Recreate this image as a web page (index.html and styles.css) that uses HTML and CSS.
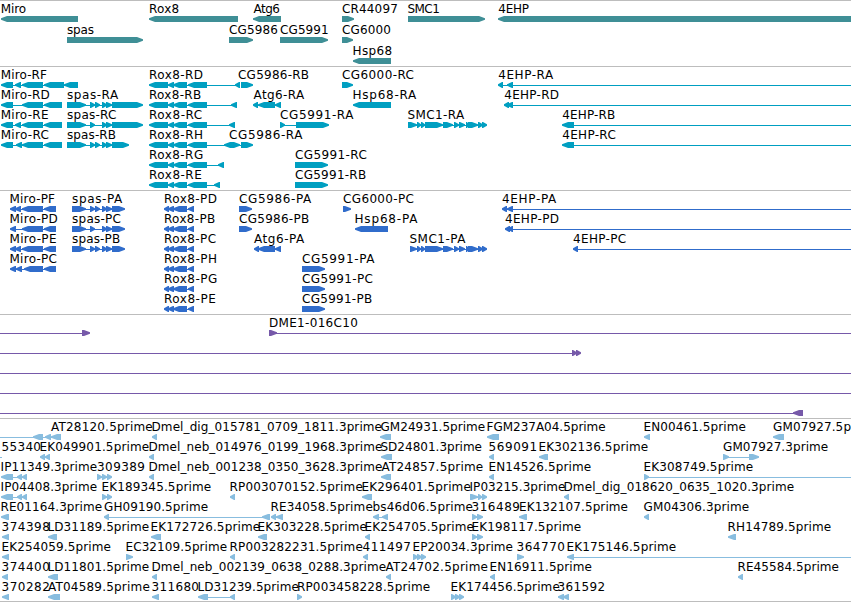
FILE: index.html
```html
<!DOCTYPE html>
<html lang="en">
<head>
<meta charset="utf-8">
<title>Genome tracks</title>
<link rel="stylesheet" href="styles.css">
</head>
<body>
<main class="browser" id="browser"></main>
<script src="tracks.js"></script>
</body>
</html>
```
FILE: styles.css
```css
body {
  margin: 0;
  background: #fff;
  overflow: hidden;
}

.browser {
  display: flex;
  flex-direction: column;
  width: 851px;
  height: 602px;
  box-sizing: border-box;
  border-bottom: 1px solid #bdbdbd;
}

.track {
  flex: none;
  border-top: 1px solid #bdbdbd;
  padding-bottom: 3px;
}

.row {
  display: block;
  width: 851px;
  height: 20px;
  overflow: visible;
}

.row text {
  font: 12px "DejaVu Sans", sans-serif;
  fill: #000;
  white-space: pre;
}

.gene { padding-bottom: 2px; color: #3f8f96; }
.gene .row { height: 21px; }
.transcript { color: #009fc1; }
.protein { color: #306ccb; }
.bac { color: #7659a9; }
.est { color: #88bddf; }

.shape { fill: currentColor; }
.link { fill: currentColor; shape-rendering: crispEdges; }
```
FILE: tracks.js
```js
// One string per row. Groups are separated by ";".
// label@start,end, then exons: "<a,b" points left, ">a,b" points right, "=a,b" is a thin line.
const rox = (p, labelEnd, last) => `Rox8-${p}@149,${labelEnd} <149,168 <168,174 <173,187 <188,207 ${last}`;
const roxP = (p, labelEnd) => `Rox8-${p}@164,${labelEnd} <164,169 <168,174 <173,187 <188,194`;
const smc = '>417,421 >421,425 >425,443 >443,453 >454,459 >459,465 >466,469 >468,478 >478,483 >482,487';

const tracks = [
  { kind: 'gene', rows: [
    'Miro@0.7,25.7 <1,78;Rox8@149,178.7 <149,238;Atg6@253.5,279.5 <253,281;CR44097@342,397.3 >342,354;SMC1@407.5,439.3 >408,485;4EHP@498.3,528.5 <498,860',
    'spas@67,93.5 >67,143;CG5986@229,277.5 >229,253;CG5991@280,328.2 >280,328;CG6000@342,390.5 >342,353',
    'Hsp68@352.5,391.7 <353,391'
  ]},
  { kind: 'transcript', rows: [
    `Miro-RF@0.7,46.5 <1,13 <15,21 <22,43 <44,64 <64,78;${rox('RD', 202.5, '<235,240')};CG5986-RB@238,308.5 >241,253;CG6000-RC@342,413.5 >342,353;4EHP-RA@498.3,552.7 <498,503 <507,513 =513,851`,
    `Miro-RD@0.7,49.3 <1,13 <22,43 <44,62;spas-RA@67,117.7 >67,86 >90,95 >95,100 >102,107 >106,112 >112,143;${rox('RB', 200.7, '<231,237')};Atg6-RA@253.5,303.8 <253,258 <258,275 <275,281;Hsp68-RA@352.5,415.8 <353,391;4EHP-RD@504.3,558.5 <504,509 <507,513 =513,851`,
    `Miro-RE@0.7,48 <1,13 <15,21 <22,43 <44,62;spas-RC@67,116 >67,86 >90,95 >102,107 >106,112 >112,143;${rox('RC', 201.7, '<229,235')};CG5991-RA@280,353 >280,285 >296,329;SMC1-RA@407.5,463.8 >408,417 ${smc};4EHP-RB@562.3,614.7 <562,574 =574,851`,
    `Miro-RC@0.7,48.3 <1,13 <16,22 <22,43 <44,62;spas-RB@67,115.5 >67,86 >90,95 >95,100 >102,107 >106,112 >112,129;${rox('RH', 202.5, '<224,233 >231,240 >241,253')};CG5986-RA@229,302;4EHP-RC@562.3,615.3 <562,574 =574,851`,
    `${rox('RG', 202.7, '<218,224')};CG5991-RC@295,366.3 >295,328`,
    `${rox('RE', 201.3, '<214,220')};CG5991-RB@295,365.7 >295,328`
  ]},
  { kind: 'protein', rows: [
    `Miro-PF@9.5,54.5 <10,16 <15,21 <22,43 <44,56;spas-PA@72,121.8 >72,86 >90,95 >95,100 >102,107 >106,112 >112,125;${roxP('PD', 216.5)};CG5986-PA@239,310.7 >239,252;CG6000-PC@343,413.5 >343,351;4EHP-PA@502,555.8 <502,507 <507,513 =513,851`,
    `Miro-PD@9.5,57.3 <10,16 <22,43 <44,56;spas-PC@72,120.5 >72,86 >90,95 >102,107 >106,112 >112,125;${roxP('PB', 214.7)};CG5986-PB@239,308.7 >239,252;Hsp68-PA@354.5,417 <355,388;4EHP-PD@505,558.5 <505,510 <508,513 =513,851`,
    `Miro-PE@9.5,56 <10,16 <15,21 <22,43 <44,56;spas-PB@72,119.7 >72,86 >90,95 >95,100 >102,107 >106,112 >112,125;${roxP('PC', 215.7)};Atg6-PA@254,303.8 <254,259 <258,275 <275,281;SMC1-PA@409.5,465 >410,417 ${smc};4EHP-PC@573,625.7 <573,578 =578,851`,
    `Miro-PC@9.5,56.5 <10,16 <16,22 <24,43 <44,56;${roxP('PH', 216.5)};CG5991-PA@302,374 >302,325`,
    `${roxP('PG', 216.7)};CG5991-PC@302,372.5 >302,325`,
    `${roxP('PE', 215.3)};CG5991-PB@302,371.7 >302,325`
  ]},
  { kind: 'bac', rows: [
    '=0,83 >82,90;DME1-016C10@269,357.3 >269,277 =277,851',
    '=0,572 >572,577 >576,581',
    '=0,851',
    '=0,851',
    '=0,794 <793,803'
  ]},
  { kind: 'est', rows: [
    'AT28120.5prime@51,152.2 =0,35 <33,43 <45,51 <51,61;Dmel_dig_015781_0709_1811.3prime@151.5,381.5 <152,157;GM24931.5prime@380.5,484.7 <380,391;FGM237A04.5prime@486.5,605.2 <487,499;EN00461.5prime@643.5,745.3 <644,650;GM07927.5p@773,850.5 <773,784',
    '55340@1.5,40.5 =0,2;EK049901.5prime@39.5,148.7 <40,45 <45,50;Dmel_neb_014976_0199_1968.3prime@148.5,381.8 <149,154;SD24801.3prime@380.5,481.5 <381,392;569091@488.5,536.7 <489,494;EK302136.5prime@538.5,647.7 <539,548;GM07927.3prime@723,827.7 >723,729 >749,759',
    'IP11349.3prime@0.5,96.7 <1,13 <17,22 <22,27;309389@97,144.5 >97,102 >102,107 >107,112;Dmel_neb_001238_0350_3628.3prime@148.5,381.8 <149,154;AT24857.5prime@381.5,482.7 <381,391;EN14526.5prime@488.5,590.7 <489,494;EK308749.5prime@643.5,752.7 >644,649 =649,851',
    'IP04408.3prime@0.5,96.7 <1,13 <17,22 <22,27;EK189345.5prime@101.5,210.7 >102,107 >107,112;RP003070152.5prime@229.5,362.3 <230,235;EK296401.5prime@361.5,470.3 <362,372;IP03215.3prime@469.5,565 >470,478 >478,482 >482,487;Dmel_dig_018620_0635_1020.3prime@563.5,793.7 <564,569',
    'RE01164.3prime@0.5,101.7 <1,9;GH09190.5prime@104,207.7 <104,109 <262,270;RE34058.5prime@270.5,372.3 <271,276 <276,283;bs46d06.5prime@372.5,472.5 <373,379 <382,388;316489@471.5,519.5 >472,477 >477,483;EK132107.5prime@519,627.5 <519,527;GM04306.3prime@643.5,748.7 <644,649',
    '374398@1.5,49.3 <2,9;LD31189.5prime@47.5,148.7 <48,57;EK172726.5prime@150.5,259.7 <151,161;EK303228.5prime@257.5,366.5 <258,267;EK254705.5prime@364.5,473.5 <365,370;EK198117.5prime@471.5,580.7 >472,477 >477,483;RH14789.5prime@727.5,830.7 <728,736',
    'EK254059.5prime@1.5,110.5 <2,9;EC32109.5prime@125.5,226.7 >126,133;RP003282231.5prime@229.5,362.3 <230,235;411497@362.5,410.5 <363,368;EP20034.3prime@412.5,512.5 >413,418 >417,422 >421,426;364770@516.5,564.5 >517,524;EK175146.5prime@566.5,675.7 <567,574 =574,851',
    '374400@1.5,49.3 <2,8;LD11801.5prime@47.5,148.7 <48,58;Dmel_neb_002139_0638_0288.3prime@151.5,385.7 <152,157;AT24702.5prime@385.5,487.5 <386,391;EN16911.5prime@489.5,591.5 <490,495;RE45584.5prime@737.5,838.5 <738,743',
    '370282@1.5,49.3 <2,9;AT04589.5prime@48,149.3 <48,60;311680@151.5,198.5 <152,159;LD31239.5prime@197.5,298.3 <198,208 <230,235;RP003458228.5prime@297,429.7 >297,302;EK174456.5prime@450.5,559.3 >451,456 >455,460 >459,464;361592@557.5,604.7 <558,564 <563,569'
  ]}
];

const TOP = 15, HEIGHT = 6, HEAD = 7;
const SIDE_BEARING = 0.5;

function arrow(dir, a, b) {
  const head = Math.min(HEAD, b - a);
  const [tip, tail, step] = dir === '<' ? [a, b, 1] : [b, a, -1];
  const neck = tip + step * head;
  const mid = TOP + HEIGHT / 2;
  const points = [
    [tip, mid - 0.7], [neck - step, TOP], [tail, TOP],
    [tail, TOP + HEIGHT], [neck - step, TOP + HEIGHT], [tip, mid + 0.7]
  ];
  return `<polygon class="shape" points="${points.join(' ')}"/>`;
}

const link = (a, b) => `<rect class="link" x="${a}" y="18" width="${b - a}" height="1"/>`;

function group(src) {
  let out = '';
  const spans = [];
  for (const part of src.trim().split(' ')) {
    if (part.includes('@')) {
      const [name, range] = part.split('@');
      const [x, end] = range.split(',').map(Number);
      const length = (end - x + SIDE_BEARING).toFixed(1);
      out += `<text x="${x}" y="12" textLength="${length}">${name}</text>`;
      continue;
    }
    const [a, b] = part.slice(1).split(',').map(Number);
    spans.push(a, b);
    if (part[0] !== '=') out += arrow(part[0], a, b);
  }
  if (spans.length > 2 || src.includes('=')) {
    const from = src.includes('=0') ? 0 : Math.min(...spans) + 3;
    const to = Math.max(...spans);
    out = link(from, to === 851 || spans.length === 2 ? to : to - 3) + out;
  }
  return out;
}

document.getElementById('browser').innerHTML = tracks.map(t =>
  `<section class="track ${t.kind}">` +
  t.rows.map(r => `<svg class="row">${r.split(';').map(group).join('')}</svg>`).join('') +
  '</section>').join('');
```
